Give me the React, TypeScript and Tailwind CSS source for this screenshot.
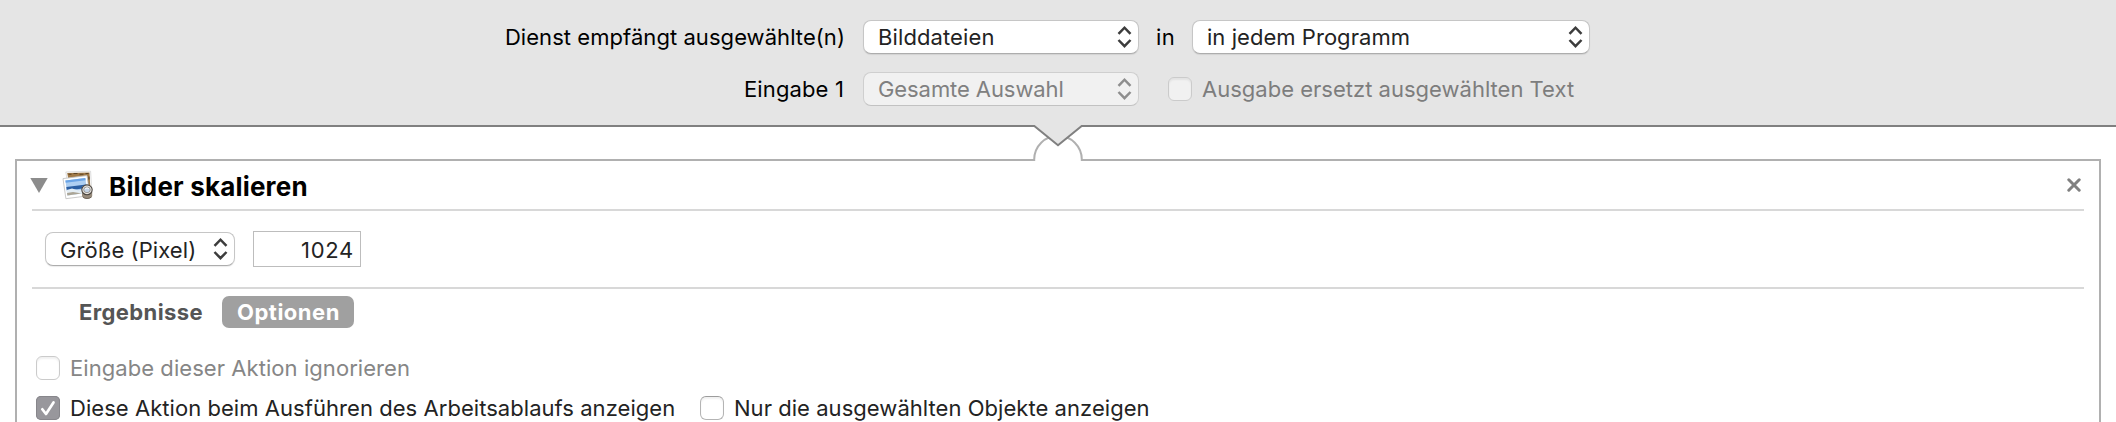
import type { ReactNode } from "react";

function Chevrons({ disabled = false, className = "mt-[1px]" }: { disabled?: boolean; className?: string }) {
  return (
    <svg width="16" height="24" viewBox="0 0 16 24" fill="none" stroke={disabled ? "#8e8e8e" : "#3c3c3c"} strokeWidth="2.5" className={`shrink-0 ${className}`}>
      <path d="M1.500 8.900 7.500 2.700l6 6.200M1.500 15l6 6.200 6-6.200" />
    </svg>
  );
}

function PopUp({ children, className = "", textClass = "pt-[3px]", disabled = false }: { children: ReactNode; className?: string; textClass?: string; disabled?: boolean }) {
  return (
    <div
      className={`flex h-[34px] shrink-0 items-start justify-between rounded-[8px] border pr-[5px] pl-[14px] ${
        disabled
          ? "border-[#cfcfcf] border-b-[#c2c2c2] bg-[#f1f1f1] text-[#808080]"
          : "border-[#c6c6c6] border-b-[#adadad] bg-white text-[#232323] shadow-[0_1px_1px_rgba(0,0,0,0.08)]"
      } ${className}`}
    >
      <span className={textClass}>{children}</span>
      <Chevrons disabled={disabled} className="mt-[4px]" />
    </div>
  );
}

function CheckBox({ checked = false, disabled = false, className = "" }: { checked?: boolean; disabled?: boolean; className?: string }) {
  if (checked) {
    return (
      <div className={`h-6 w-6 shrink-0 rounded-[5px] bg-[#98979c] shadow-[inset_0_0_0_1px_#87868b] ${className}`}>
        <svg width="24" height="24" viewBox="0 0 24 24" fill="none" stroke="#fff" strokeWidth="2.700" strokeLinecap="round" strokeLinejoin="round">
          <path d="M6.300 13.200 10 18 17.500 6.500" />
        </svg>
      </div>
    );
  }
  return (
    <div
      className={`h-6 w-6 shrink-0 rounded-[6px] border shadow-[inset_0_2px_2px_rgba(0,0,0,0.06)] ${
        disabled ? "border-[#cbcbcb]" : "border-[#b4b4b4] border-t-[#9c9c9c] bg-white"
      } ${className}`}
    />
  );
}

function ScaleImagesIcon() {
  return (
    <svg width="34" height="34" viewBox="0 0 34 34" className="mt-[7px] ml-[13px] shrink-0">
      <path d="M4.800 4 29.600 3.200 30.600 21 8 23Z" fill="#fff" stroke="#cfcfcf" strokeWidth=".7" />
      <path d="M6.200 5 28.500 4.500 29.300 19 9 20Z" fill="#a07a48" />
      <path d="M7.500 6.200h3m2-.7h4m2 .7h4m2-.7h3m.5 3v3m-1 3v3" stroke="#5d4425" strokeWidth="1.100" fill="none" />
      <path d="M2 10.600 26 7.600 28.900 27.600 4.900 30.700Z" fill="#fff" stroke="#bcbcbc" strokeWidth=".8" />
      <path d="M4.400 12.500 24.300 10 26.500 24.800 6.400 27.400Z" fill="#aecff2" />
      <path d="M4.400 12.500 24.300 10 24.600 12.200 4.700 14.700Z" fill="#6aa4e6" />
      <path d="M5.300 19 25.200 16.600 25.800 20 5.800 22.500Z" fill="#2b5fa3" />
      <path d="M5.700 22 11 20.600 17 22.200 26 21 26.500 24.800 6.400 27.400Z" fill="#e4eef5" />
      <path d="M6 25 12 24 18 25 20 25.600 6.400 27.400Z" fill="#aba596" />
      <path d="M21 24v3.800c0 4 10.200 4 10.200 0V24Z" fill="#978b7c" />
      <path d="M22 29c2 2 6 2 8.400 0" fill="none" stroke="#6d6358" strokeWidth="1" />
      <ellipse cx="26" cy="21.800" rx="5.200" ry="4.900" fill="#eeeae4" stroke="#4a4540" strokeWidth="1.100" />
      <ellipse cx="26" cy="21.800" rx="3.300" ry="2.900" fill="#c3d3e6" stroke="#8b8780" strokeWidth=".8" />
      <path d="M23.900 21.300c1.300-1.700 3-1.700 4-.4" fill="none" stroke="#fff" strokeWidth="1" />
    </svg>
  );
}

function Connector() {
  return (
    <svg width="60" height="46" viewBox="1028 120 60 46" className="absolute top-[120px] left-[1028px]">
      <rect x="1034" y="125" width="48" height="3" fill="#fff" />
      <rect x="1034" y="158" width="48" height="4" fill="#fff" />
      <path d="M1034.200 161V159.500A23.800 23.800 0 0 1 1081.800 159.500V161" fill="#fff" stroke="#b0b0b0" strokeWidth="2" />
      <path d="M1032 124V126H1034L1058 145.500 1082 126H1084V124Z" fill="#e5e5e5" />
      <path d="M1032 126H1034.300L1058 145.300 1081.700 126H1084" fill="none" stroke="#808080" strokeWidth="2" />
    </svg>
  );
}

export default function App() {
  return (
    <div className="relative h-[422px] w-[2116px] overflow-hidden bg-white font-['Inter',sans-serif] text-[22px] leading-[26px] whitespace-nowrap text-black">
      <header className="flex h-[127px] flex-col gap-[18px] border-b-2 border-[#808080] bg-[#e5e5e5] pt-5">
        <div className="flex h-[34px]">
          <div className="w-[845px] shrink-0 pt-1 text-right tracking-[0.056px]">Dienst empfängt ausgewählte(n)</div>
          <PopUp className="ml-[18px] w-[276px] tracking-[0.110px]">Bilddateien</PopUp>
          <div className="ml-[17px] w-[36px] shrink-0 pt-1 tracking-[0.300px]">in</div>
          <PopUp className="w-[398px] tracking-[0.045px]">in jedem Programm</PopUp>
        </div>
        <div className="flex h-[34px]">
          <div className="w-[845px] shrink-0 pt-1 pr-[1px] text-right tracking-[0.140px]">Eingabe 1</div>
          <PopUp disabled className="ml-[18px] w-[276px] tracking-[-0.080px]">Gesamte Auswahl</PopUp>
          <CheckBox disabled className="mt-[5px] ml-[29px] bg-[#f1f1f1]" />
          <div className="ml-[10px] pt-1 tracking-[0.010px] text-[#7d7d7d]">Ausgabe ersetzt ausgewählten Text</div>
        </div>
      </header>

      <section className="mx-[15px] mt-8 flex h-[263px] flex-col border-2 border-b-0 border-[#b0b0b0] px-[15px]">
        <div className="flex h-[50px] shrink-0 border-b-2 border-[#d8d8d8]">
          <svg width="18" height="15" viewBox="0 0 18 15" className="mt-[17px] -ml-[2px] shrink-0">
            <path d="M.3 0H17.700L9 15Z" fill="#8c8c8c" />
          </svg>
          <ScaleImagesIcon />
          <h1 className="mt-[10px] ml-[14px] text-[26px] leading-[32px] font-bold tracking-[0.180px]">Bilder skalieren</h1>
          <svg width="14" height="14" viewBox="0 0 14 14" className="mt-[17px] mr-[3px] ml-auto" stroke="#808080" strokeWidth="3" strokeLinecap="round">
            <path d="M1.800 1.800 12.200 12.200M12.200 1.800 1.800 12.200" />
          </svg>
        </div>

        <div className="flex h-[78px] shrink-0 border-b-2 border-[#d8d8d8] pt-5 pl-[13px]">
          <PopUp className="mt-[1px] w-[190px] tracking-[0.080px]" textClass="pt-1">Größe (Pixel)</PopUp>
          <div className="ml-[18px] h-9 w-[108px] border border-[#bdbdbd] pt-[5px] pr-[6px] text-right tracking-[0.700px] text-[#232323]">1024</div>
        </div>

        <div className="flex shrink-0 pt-[7px] pl-[47px] font-bold">
          <div className="w-[143px] pt-[3px] tracking-[0.390px] text-[#555]">Ergebnisse</div>
          <div className="h-8 w-[132px] rounded-[7px] bg-[#a0a0a0] pt-[3px] pl-[15px] tracking-[0.500px] text-white">Optionen</div>
        </div>

        <div className="mt-[27px] flex h-[26px] shrink-0 pl-1">
          <CheckBox disabled className="mt-[1px] bg-white" />
          <div className="ml-[10px] tracking-[0.060px] text-[#868686]">Eingabe dieser Aktion ignorieren</div>
        </div>
        <div className="mt-[14px] flex h-[26px] shrink-0 pl-1 text-[#232323]">
          <CheckBox checked className="mt-[1px]" />
          <div className="ml-[10px] w-[630px] tracking-[0.050px]">Diese Aktion beim Ausführen des Arbeitsablaufs anzeigen</div>
          <CheckBox className="mt-[1px]" />
          <div className="ml-[10px] tracking-[0.045px]">Nur die ausgewählten Objekte anzeigen</div>
        </div>
      </section>

      <Connector />
    </div>
  );
}
